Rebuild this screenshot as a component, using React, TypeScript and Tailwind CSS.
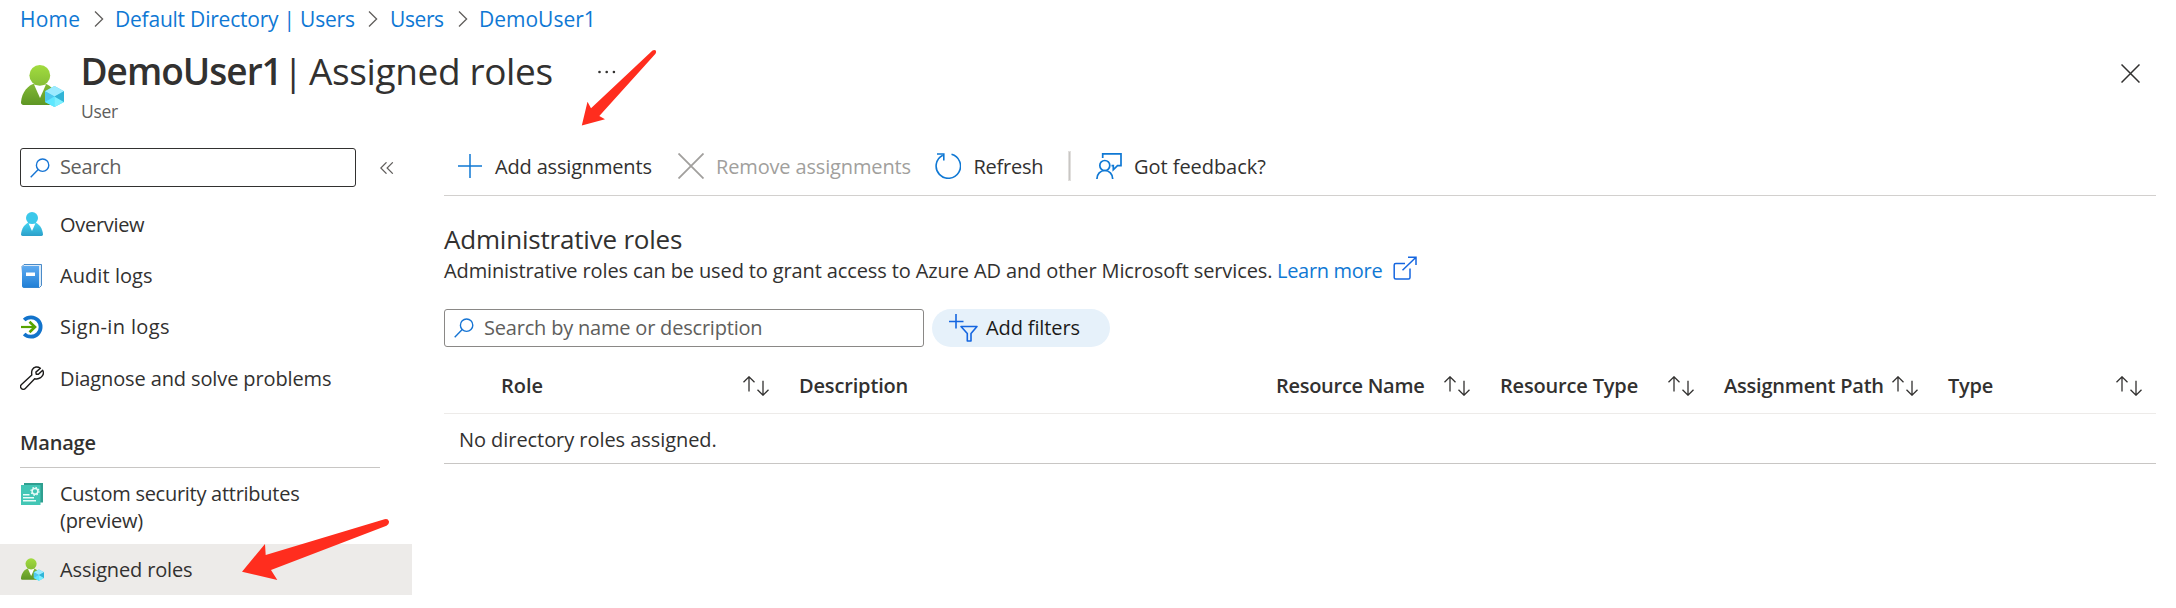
import React from "react";

function Chevron() {
  return (
    <svg className="h-[18px] w-[10px] shrink-0" viewBox="0 0 10 18" fill="none" stroke="#605e5c" strokeWidth="1.3">
      <path d="M1 1.5 8.6 9 1 16.5" />
    </svg>
  );
}

function UserRoleIcon({ className, id }: { className: string; id: string }) {
  return (
    <svg className={className} viewBox="0 0 43 42">
      <defs>
        <linearGradient id={id} x1="0" y1="0" x2="0" y2="1">
          <stop offset="0" stopColor="#a2dc3f" />
          <stop offset="1" stopColor="#86be36" />
        </linearGradient>
        <linearGradient id={id + "b"} x1="0" y1="0" x2="0" y2="1">
          <stop offset="0" stopColor="#82b936" />
          <stop offset="1" stopColor="#5e9624" />
        </linearGradient>
      </defs>
      <path d="M2.500 40A2.500 2.500 0 0 1 0 37C1 27 7 20 14 18.500H23C31 20 36 28 36 40Z" fill={`url(#${id}b)`} />
      <path d="M13 19.500 19 33 25 19.500Z" fill="#fff" />
      <circle cx="18.800" cy="10.400" r="10.400" fill={`url(#${id})`} />
      <path d="M33.500 21 43 26.300V37L33.500 42 24 37V26.300Z" fill="#50d5f0" />
      <path d="M33.500 21 43 26.300 33.500 31.500 24 26.300Z" fill="#9cebff" />
      <path d="M33.500 31.500 24 26.300V37Z" fill="#50c8ee" />
      <path d="M33.500 31.500 24 37 33.500 42Z" fill="#5ee8ff" />
      <path d="M33.500 31.500 43 37 33.500 42Z" fill="#7df0ff" />
      <path d="M33.500 31.500 43 26.300V37Z" fill="#32b4d6" />
    </svg>
  );
}

function SearchIcon({ className }: { className: string }) {
  return (
    <svg className={className} viewBox="0 0 20 20" fill="none" stroke="#1574d4" strokeWidth="1.4">
      <circle cx="12.600" cy="7.200" r="6.200" />
      <path d="M8.200 11.600.700 19.200" />
    </svg>
  );
}

function OverviewIcon() {
  return (
    <svg className="h-6 w-[22px]" viewBox="0 0 22 24">
      <defs>
        <linearGradient id="ov" x1="0" y1="0" x2="0" y2="1">
          <stop offset="0" stopColor="#43d4f2" />
          <stop offset="1" stopColor="#2c9fc9" />
        </linearGradient>
      </defs>
      <path d="M1.500 24Q0 24 0 22.300C.500 16.500 4 11.500 8 10.500h6c4 1 7.500 6 8 11.800Q22 24 20.500 24Z" fill="url(#ov)" />
      <path d="M7.600 11.500 11 19l3.400-7.500Z" fill="#fff" />
      <circle cx="11" cy="6" r="6" fill="#3bc8ea" />
    </svg>
  );
}

function AuditIcon() {
  return (
    <svg className="h-6 w-[22px]" viewBox="0 0 22 24">
      <defs>
        <linearGradient id="au" x1="0" y1="0" x2="0" y2="1">
          <stop offset="0" stopColor="#5eaaf0" />
          <stop offset="1" stopColor="#1f7fd6" />
        </linearGradient>
      </defs>
      <path d="M1 2.500 3 .5H20.500V21.500L18.500 23.500H2.500Z" fill="#dcebf8" stroke="#1f70bd" strokeWidth=".8" />
      <path d="M1 3.500Q1 2 2.500 2H18V23.500H2.500Q1 23.500 1 22Z" fill="url(#au)" />
      <path d="M5 8.500H14V12H5Z" fill="#fff" />
    </svg>
  );
}

function SignInIcon() {
  return (
    <svg className="h-6 w-[22px]" viewBox="0 0 22 24" fill="none">
      <path d="M3.200 5A9.700 9.700 0 1 1 3.200 19" stroke="#1273cb" strokeWidth="3.800" />
      <path d="M0 12H14" stroke="#57a300" strokeWidth="2.200" />
      <path d="M8.500 6.800 14 12 8.500 17.200" stroke="#57a300" strokeWidth="2.600" />
    </svg>
  );
}

function WrenchIcon() {
  return (
    <svg className="h-6 w-6" viewBox="0 0 24 24" fill="none" stroke="#1b1a19" strokeWidth="1.400" strokeLinejoin="round">
      <path d="M20.400 2.200C17.600.200 13.900.500 12.300 3.600 11.400 5.400 11.500 7 11.800 8.900L1.500 18.500C.300 19.700.300 21.400 1.400 22.500 2.500 23.600 4.200 23.600 5.300 22.500L14.700 12.700C16.700 13.200 18.700 13 20.600 11.700 23.200 9.800 23.900 6.600 22.700 4.200L18.400 8.300 16.200 8.200 15.900 6.100Z" />
    </svg>
  );
}

function AttributesIcon() {
  return (
    <svg className="h-[22px] w-[22px]" viewBox="0 0 22 22">
      <path d="M3 0H22V19.500H3Z" fill="#2f9f90" />
      <path d="M0 2H19.500V22H0Z" fill="#42c6b5" />
      <circle cx="14" cy="8.300" r="2.900" fill="none" stroke="#e9fbf8" strokeWidth="1.500" />
      <circle cx="14" cy="8.300" r="4" fill="none" stroke="#e9fbf8" strokeWidth="1.200" strokeDasharray="1.500 1.640" />
      <path d="M2 11.800H8.500M2 14.800H13M2 17.800H15" stroke="#e9fbf8" strokeWidth="1.500" />
    </svg>
  );
}

function SortIcon() {
  return (
    <svg className="h-5 w-[26px] shrink-0" viewBox="0 0 26 20" fill="none" stroke="#323130" strokeWidth="1.300">
      <path d="M6 .8V15.500M.500 6.300 6 .8 11.500 6.300" />
      <path d="M20 4.700V19.200M14.500 13.700 20 19.200 25.500 13.700" />
    </svg>
  );
}

function NavItem({ icon, children }: { icon: React.ReactNode; children: React.ReactNode }) {
  return (
    <li className="flex h-[51.4px] items-center">
      <span className="flex w-10 pl-px">{icon}</span>
      {children}
    </li>
  );
}

export default function App() {
  return (
    <div className="relative h-[608px] w-[2176px] overflow-hidden bg-white font-['Open_Sans','Noto_Sans',sans-serif] text-[20px] leading-[27px] whitespace-nowrap text-[#323130]">
      <nav className="flex h-[38px] items-center pl-5 text-[21px] text-[#0f78d4]">
        <a className="w-[74px] tracking-[0.2px]">Home</a>
        <Chevron />
        <a className="ml-[11px] w-[253px] tracking-[-0.22px]">Default Directory | Users</a>
        <Chevron />
        <a className="ml-[12px] w-[68px] tracking-[-0.4px]">Users</a>
        <Chevron />
        <a className="ml-[11px]">DemoUser1</a>
      </nav>

      <header className="flex h-[110px] pl-[21px]">
        <UserRoleIcon id="hdr" className="mt-[27px] h-[42px] w-[43px]" />
        <div className="ml-[15px] pt-[8.500px]">
          <h1 className="flex h-12 items-center text-[37px] leading-[48px]">
            <span className="w-[204px] pl-[1.500px] font-semibold tracking-[-1px]">DemoUser1</span>
            <span className="w-[26px]">|</span>
            <span className="w-[289px] tracking-[-0.37px]">Assigned roles</span>
            <svg className="mt-0.5 h-1 w-[18px]" viewBox="0 0 18 4" fill="#323130">
              <circle cx="1.500" cy="2" r="1.300" />
              <circle cx="8.700" cy="2" r="1.300" />
              <circle cx="15.900" cy="2" r="1.300" />
            </svg>
          </h1>
          <p className="mt-[4.500px] pl-[2px] text-[17.5px] leading-6 tracking-[-0.3px] text-[#605e5c]">User</p>
        </div>
        <svg className="mt-[26px] mr-[36px] ml-auto h-[19px] w-[19px]" viewBox="0 0 19 19" stroke="#323130" strokeWidth="1.500">
          <path d="M.500.500 18.500 18.500M18.500.500.500 18.500" />
        </svg>
      </header>

      <div className="flex">
        <aside className="w-[412px] shrink-0">
          <div className="flex items-center pl-5">
            <div className="flex h-[39px] w-[336px] items-center rounded-[3px] border border-[#323130] pl-[9px]">
              <SearchIcon className="h-5 w-5" />
              <span className="ml-[10px] -translate-y-px tracking-[-0.38px] text-[#605e5c]">Search</span>
            </div>
            <svg className="ml-6 h-3 w-[14px]" viewBox="0 0 14 12" fill="none" stroke="#605e5c" strokeWidth="1.200">
              <path d="M6.500.300.800 6 6.500 11.700M12.800.300 7.100 6 12.800 11.700" />
            </svg>
          </div>
          <ul className="mt-[11.500px] pl-5">
            <NavItem icon={<OverviewIcon />}><span className="tracking-[-0.3px]">Overview</span></NavItem>
            <NavItem icon={<AuditIcon />}><span className="tracking-[0.06px]">Audit logs</span></NavItem>
            <NavItem icon={<SignInIcon />}><span className="tracking-[0.35px]">Sign-in logs</span></NavItem>
            <NavItem icon={<span className="-ml-px"><WrenchIcon /></span>}><span className="tracking-[-0.12px]">Diagnose and solve problems</span></NavItem>
          </ul>
          <h2 className="mt-[25px] ml-5 h-[39px] w-[360px] border-b border-[#c8c6c4] font-semibold tracking-[-0.2px]">Manage</h2>
          <div className="mt-[11.800px] flex h-[64px] pl-[21px]">
            <span className="mt-[3px] w-[39px]"><AttributesIcon /></span>
            <p className="tracking-[-0.27px]">Custom security attributes<br />(preview)</p>
          </div>
          <div className="flex h-[51px] items-center bg-[#edebe9] pl-[21px]">
            <span className="w-[39px]"><UserRoleIcon id="nav" className="h-[23px] w-[23px]" /></span>
            <span className="pt-px tracking-[-0.15px]">Assigned roles</span>
          </div>
        </aside>

        <main className="ml-8 w-[1712px]">
          <div className="flex h-12 items-center border-b border-[#d2d0ce] pb-[11px] pl-[14px]">
            <svg className="h-6 w-6" viewBox="0 0 24 24" stroke="#0f78d4" strokeWidth="1.500">
              <path d="M0 12H24M12 0V24" />
            </svg>
            <span className="ml-[13px] w-[183px] tracking-[-0.17px]">Add assignments</span>
            <svg className="h-[26px] w-[26px]" viewBox="0 0 26 26" stroke="#a19f9d" strokeWidth="1.800">
              <path d="M.500.500 25.500 25.500M25.500.500.500 25.500" />
            </svg>
            <span className="ml-[12px] w-[219px] tracking-[-0.15px] text-[#a19f9d]">Remove assignments</span>
            <svg className="h-[26px] w-[26px]" viewBox="0 0 26 26" fill="none" stroke="#0f78d4" strokeWidth="1.600">
              <path d="M16.500 1.300A12.200 12.200 0 1 1 7.800 2.200" />
              <path d="M2 1H8.800V7.500" />
            </svg>
            <span className="ml-[12.500px] w-[95.500px] tracking-[-0.26px]">Refresh</span>
            <span className="h-7 w-px bg-[#c8c6c4] outline-[0.5px] outline-[#e1dfdd]" />
            <svg className="ml-[26px] h-[26px] w-[26px]" viewBox="0 0 26 26" fill="none" stroke="#0f78d4" strokeWidth="1.700">
              <circle cx="8.800" cy="12.500" r="5" />
              <path d="M.900 26C.900 21 4.400 17.500 8.800 17.500S16.700 21 16.700 26" />
              <path d="M6.700 5V.900H25V12.700H21.500L17.300 16.800V12.700H15.500" />
            </svg>
            <span className="ml-[12px] tracking-[-0.05px]">Got feedback?</span>
          </div>

          <h2 className="mt-[25px] text-[26px] leading-9 tracking-[-0.2px]">Administrative roles</h2>
          <div className="flex h-[27px] items-center">
            <span className="w-[833px] tracking-[-0.12px]">
              Administrative roles can be used to grant access to Azure AD and other Microsoft services.
            </span>
            <a className="w-[116px] tracking-[-0.3px] text-[#0f78d4]">Learn more</a>
            <svg className="-mt-[6px] h-6 w-6" viewBox="0 0 24 24" fill="none" stroke="#1566e0" strokeWidth="1.500">
              <path d="M12 7.500H2.800Q1.200 7.500 1.200 9V21.500Q1.200 23 2.800 23H15.500Q17 23 17 21.500V12.500" />
              <path d="M15 1.200H23V9M23 1.200 9.500 14.300" />
            </svg>
          </div>

          <div className="mt-[25px] flex h-[38px] items-center gap-2">
            <div className="flex h-[38px] w-[480px] items-center rounded-[3px] border border-[#8a8886] pl-[9px]">
              <SearchIcon className="h-5 w-5" />
              <span className="ml-[10px] -translate-y-px tracking-[-0.2px] text-[#605e5c]">Search by name or description</span>
            </div>
            <button className="flex h-[38px] w-[178px] items-center rounded-full bg-[#e6f1fa] pl-[17px] text-[#1b1a19]">
              <svg className="h-[28px] w-[29px]" viewBox="0 0 29 28" fill="none" stroke="#1566e0" strokeWidth="1.600">
                <path d="M0 7.500H14.500M7 0V14.500" />
                <path d="M12 12.500H28L22 19.500V27H18.300V19.500Z" strokeLinejoin="round" />
              </svg>
              <span className="ml-2 -translate-y-px tracking-[-0.12px]">Add filters</span>
            </button>
          </div>

          <div className="mt-[11px] grid h-[56px] grid-cols-[298px_476px_224px_224px_224px_209px] items-center border-b border-[#edebe9] pl-[57px] font-semibold">
            <div className="flex items-center justify-between pr-[30px]">Role<SortIcon /></div>
            <div className="tracking-[-0.16px]">Description</div>
            <div className="flex items-center justify-between pr-[29px] pl-px tracking-[-0.28px]">Resource Name<SortIcon /></div>
            <div className="flex items-center justify-between pr-[29px] pl-px tracking-[-0.17px]">Resource Type<SortIcon /></div>
            <div className="flex items-center justify-between pr-[29px] pl-px tracking-[-0.21px]">Assignment Path<SortIcon /></div>
            <div className="flex items-center justify-between pr-[14px] pl-px tracking-[-0.24px]">Type<SortIcon /></div>
          </div>
          <div className="flex h-[50px] items-center border-b border-[#c8c6c4] pt-[2px] pl-[15px] tracking-[-0.06px]">
            No directory roles assigned.
          </div>
        </main>
      </div>

      <svg className="pointer-events-none absolute inset-0 h-[608px] w-[2176px]" viewBox="0 0 2176 608" fill="#ff2d1e">
        <path d="M581.800 125.500 587.500 101.700 591 108.300 652.500 50.500Q654.500 49.400 655.800 50.600 656.600 52 655.500 53.800L599.300 116 605 119.300Z" />
        <path d="M242 571.700 265 544 265.700 555 384.500 519.300Q388 518.300 389 521.500 389.300 524.500 386.500 525.800L271 570 277.300 580Z" />
      </svg>
    </div>
  );
}
